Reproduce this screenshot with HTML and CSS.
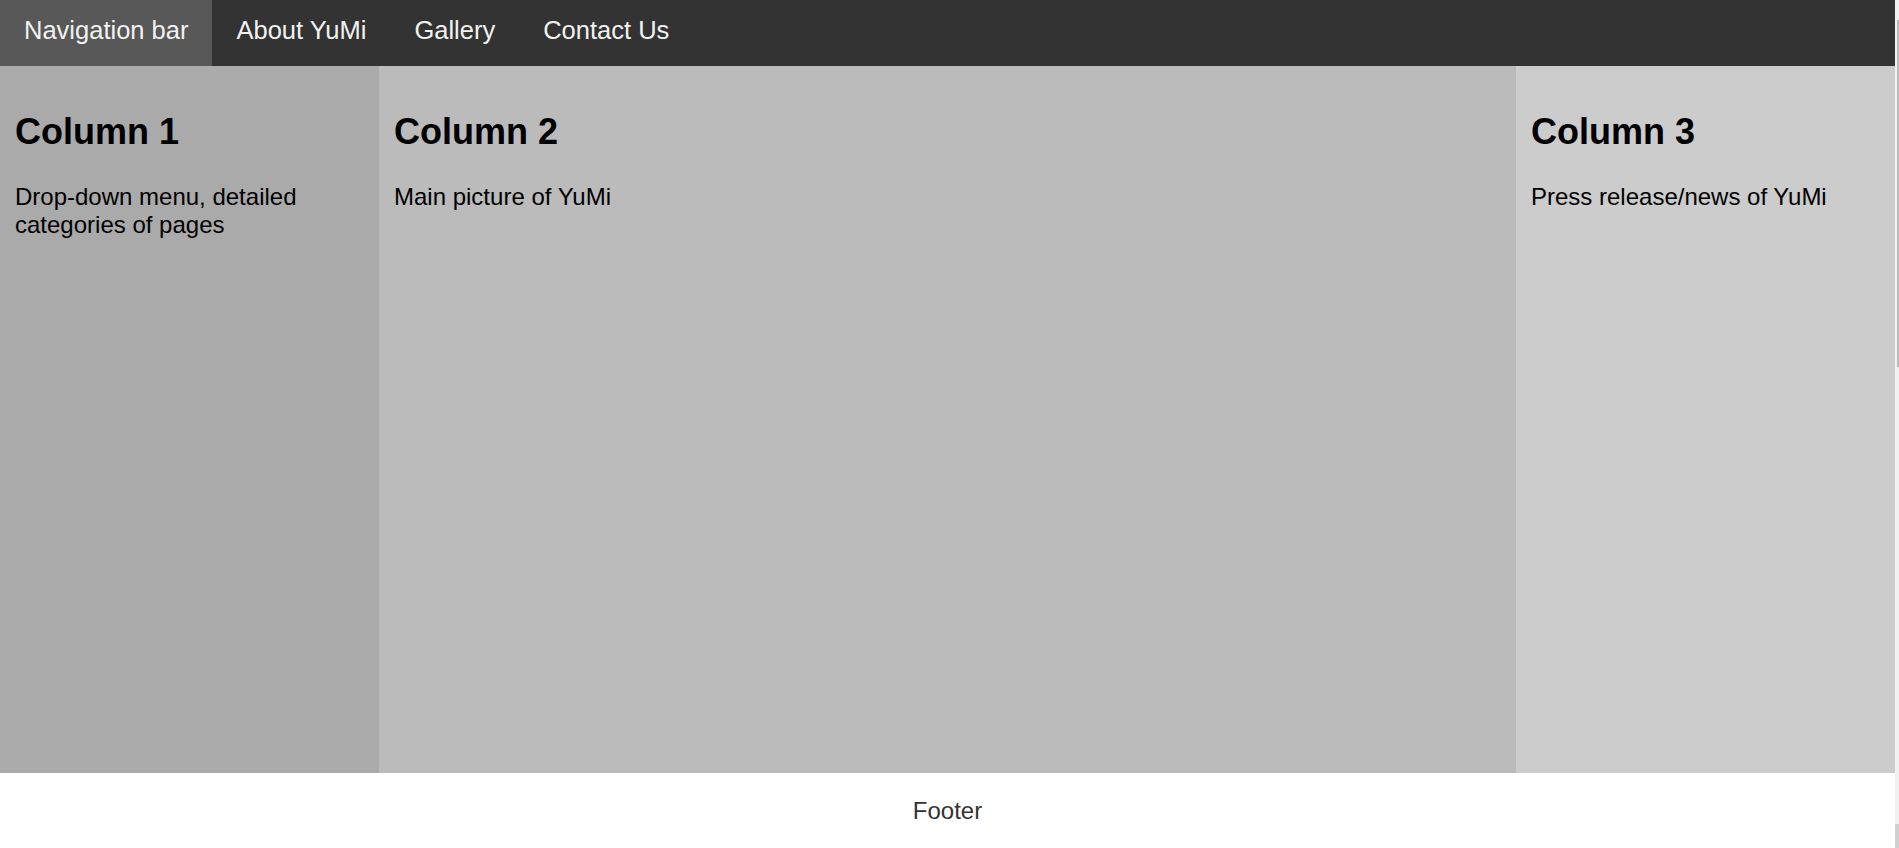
FILE: index.html
```html
<!DOCTYPE html>
<html lang="en">
<head>
<meta charset="utf-8">
<title>YuMi</title>
<link rel="stylesheet" href="styles.css">
</head>
<body>
<nav class="topnav">
  <a class="nav-item active" href="#">Navigation bar</a>
  <a class="nav-item" href="#">About YuMi</a>
  <a class="nav-item" href="#">Gallery</a>
  <a class="nav-item" href="#">Contact Us</a>
</nav>
<main class="row">
  <section class="column side col-1">
    <h2>Column 1</h2>
    <p>Drop-down menu, detailed categories of pages</p>
  </section>
  <section class="column middle col-2">
    <h2>Column 2</h2>
    <p>Main picture of YuMi</p>
  </section>
  <section class="column side col-3">
    <h2>Column 3</h2>
    <p>Press release/news of YuMi</p>
  </section>
</main>
<footer class="footer">
  <p class="footer-text">Footer</p>
</footer>
<div class="scroll-thumb"></div>
<div class="scroll-end"></div>
</body>
</html>
```

FILE: styles.css
```css
* {
  box-sizing: border-box;
}

html {
  background: #f1f1f1;
}

body {
  margin: 0 4px 0 0;
  height: 848px;
  overflow: hidden;
  font-family: "Liberation Sans", Arial, sans-serif;
  background: #ffffff;
  color: #000;
}

.scroll-thumb {
  position: fixed;
  top: 20px;
  right: 0;
  width: 2px;
  height: 347px;
  background: #bbbbbb;
}

.scroll-end {
  position: fixed;
  bottom: 0;
  right: 0;
  width: 4px;
  height: 24px;
  background: #d0d0d0;
}

.topnav {
  display: flex;
  height: 66px;
  background: #333333;
}

.nav-item {
  display: block;
  padding: 16px 24px 0;
  font-size: 25.5px;
  line-height: 29px;
  color: #f2f2f2;
  text-decoration: none;
}

.nav-item.active {
  background: #575857;
}

.row {
  display: flex;
  height: 707px;
}

.column {
  padding: 15px;
}

.column.side {
  width: 20%;
}

.column.middle {
  width: 60%;
}

.col-1 { background: #aaaaaa; }
.col-2 { background: #bbbbbb; }
.col-3 { background: #cccccc; }

.column h2 {
  font-size: 36px;
  margin: 30px 0;
}

.column p {
  font-size: 24px;
  margin: 0;
}

.footer {
  height: 75px;
  padding-top: 24px;
  text-align: center;
}

.footer-text {
  margin: 0;
  font-size: 24px;
  color: #333333;
}
```
